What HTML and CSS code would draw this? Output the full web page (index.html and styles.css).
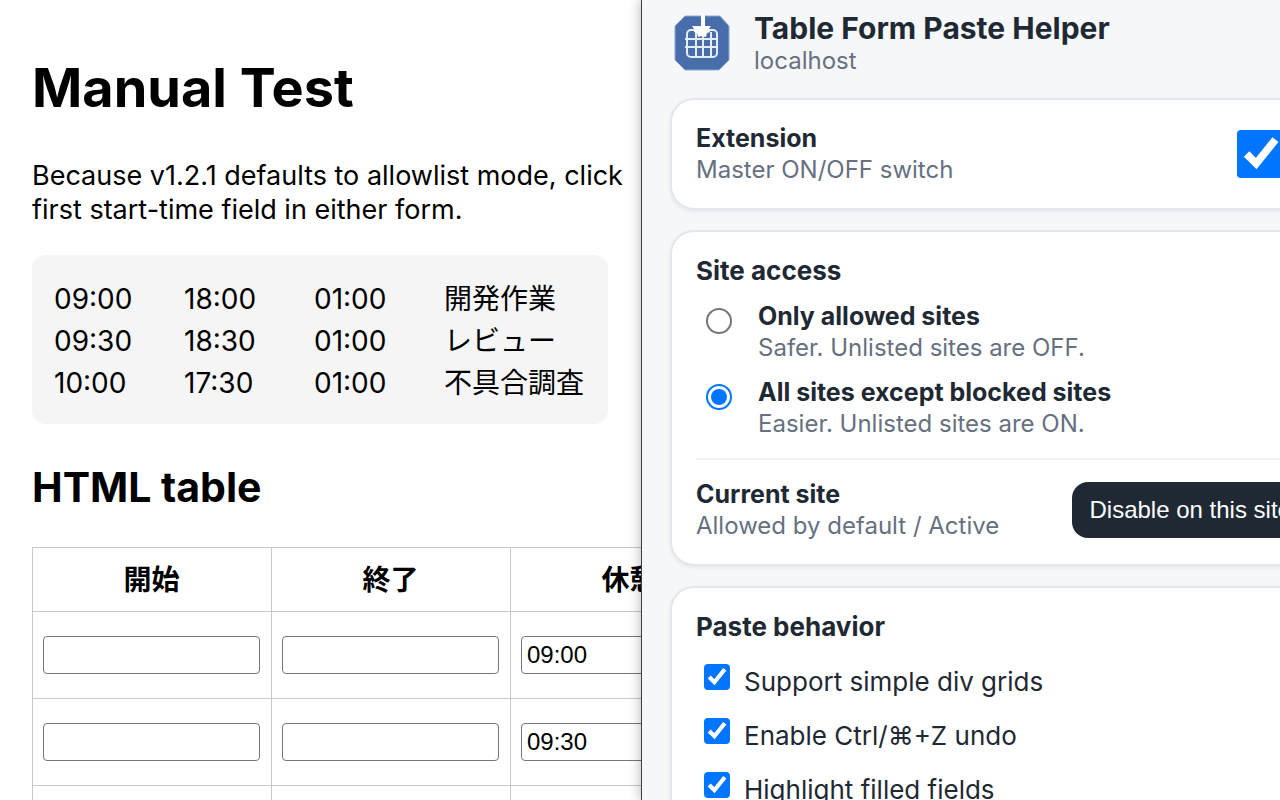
FILE: index.html
```
<!DOCTYPE html>
<html lang="en">
    <head>
        <meta charset="utf-8">
        <title>Manual Test</title>
        <link rel="stylesheet" href="styles.css">
    </head>
    <body>
        <div class="screen">
            <!-- test page -->
            <main class="page">
                <h1>Manual Test</h1>
                <p>Because v1.2.1 defaults to allowlist mode, click<br>first start-time field in either form.</p>
                <pre class="sample">09:00	18:00	01:00	開発作業
09:30	18:30	01:00	レビュー
10:00	17:30	01:00	不具合調査</pre>
                <h2>HTML table</h2>
                <table class="form-table">
                    <thead>
                        <tr><th>開始</th><th>終了</th><th>休憩</th></tr>
                    </thead>
                    <tbody>
                        <tr>
                            <td><input type="text" aria-label="開始 1"></td>
                            <td><input type="text" aria-label="終了 1"></td>
                            <td><input type="text" aria-label="休憩 1" value="09:00"></td>
                        </tr>
                        <tr>
                            <td><input type="text" aria-label="開始 2"></td>
                            <td><input type="text" aria-label="終了 2"></td>
                            <td><input type="text" aria-label="休憩 2" value="09:30"></td>
                        </tr>
                        <tr>
                            <td><input type="text" aria-label="開始 3"></td>
                            <td><input type="text" aria-label="終了 3"></td>
                            <td><input type="text" aria-label="休憩 3"></td>
                        </tr>
                    </tbody>
                </table>
            </main>

            <!-- extension popup -->
            <aside class="popup">
                <div class="popup-body">
                    <header class="brand">
                        <svg class="logo" viewBox="0 0 56 56" aria-hidden="true">
                            <path d="M11 1h35l9 10v34l-10 10H11L1 45V11z" fill="#476eab" stroke="#8ea8d2"/>
                            <g fill="none" stroke="#e4ecf8" stroke-width="2">
                                <rect x="13" y="15" width="30" height="27" rx="4"/>
                                <path d="M22 17v25M29 17v25M37 17v25M11 24h32M11 32h32"/>
                            </g>
                            <path d="M27 0h4v11h6l-2 3 1 3-3 1-1 4-4-1-4 1-1-4-3-1v-3l-2-3h9z" fill="#fff"/>
                        </svg>
                        <div>
                            <div class="name">Table Form Paste Helper</div>
                            <div class="hint">localhost</div>
                        </div>
                    </header>

                    <section class="card row">
                        <label for="master">
                            <strong>Extension</strong>
                            <span class="hint">Master ON/OFF switch</span>
                        </label>
                        <input type="checkbox" id="master" class="check check-big" checked>
                    </section>

                    <section class="card">
                        <h3>Site access</h3>
                        <div class="choice">
                            <input type="radio" name="mode" id="allowed" class="radio">
                            <label for="allowed">
                                <strong>Only allowed sites</strong>
                                <span class="hint">Safer. Unlisted sites are OFF.</span>
                            </label>
                        </div>
                        <div class="choice">
                            <input type="radio" name="mode" id="all" class="radio" checked>
                            <label for="all">
                                <strong>All sites except blocked sites</strong>
                                <span class="hint">Easier. Unlisted sites are ON.</span>
                            </label>
                        </div>
                        <div class="row current">
                            <div>
                                <strong>Current site</strong>
                                <span class="hint">Allowed by default / Active</span>
                            </div>
                            <button type="button">Disable on this site</button>
                        </div>
                    </section>

                    <section class="card">
                        <h3>Paste behavior</h3>
                        <div class="option">
                            <input type="checkbox" id="grids" class="check" checked>
                            <label for="grids">Support simple div grids</label>
                        </div>
                        <div class="option">
                            <input type="checkbox" id="undo" class="check" checked>
                            <label for="undo">Enable Ctrl/⌘+Z undo</label>
                        </div>
                        <div class="option">
                            <input type="checkbox" id="highlight" class="check" checked>
                            <label for="highlight">Highlight filled fields</label>
                        </div>
                    </section>
                </div>
            </aside>
        </div>
    </body>
</html>
```
FILE: styles.css
```
* {
    box-sizing: border-box;
}
body {
    margin: 0;
    background: #fff;
    color: #000;
    font-family: Inter, "Noto Sans CJK JP", sans-serif;
}
.screen {
    display: grid;
    grid-template-columns: calc(50% + 1px) 1fr;
    height: 100vh;
    overflow: hidden;
}
/* test page */
.page {
    min-width: 0;
    overflow: hidden;
    padding: 54px 0 0 32px;
    font-size: 27px;
    line-height: 34px;
    white-space: nowrap;
}
.page h1 {
    margin: 0 0 37px;
    font-size: 54px;
    line-height: 68px;
}
.page p {
    margin: 0 0 28px;
}
.sample {
    display: inline-block;
    margin: 0;
    padding: 23px 24px 20px 22px;
    border-radius: 14px;
    background: #f5f5f5;
    font-family: inherit;
    font-size: 28px;
    line-height: 42px;
    tab-size: 130px;
    vertical-align: top;
}
.page h2 {
    margin: 37px 0 34px;
    font-size: 41px;
    line-height: 52px;
}
.form-table {
    border-collapse: collapse;
}
.form-table th,
.form-table td {
    border: 1px solid #c8c8c8;
    padding: 0 11px 0 10px;
}
.form-table th {
    height: 64px;
    font-size: 28px;
}
.form-table td {
    height: 87px;
}
.form-table input {
    display: block;
    width: 217px;
    height: 38px;
    padding: 0 5px;
    border: 1px solid #767676;
    border-radius: 4px;
    background: #fff;
    color: #000;
    font: 24px "Liberation Sans", sans-serif;
}
/* popup */
.popup {
    z-index: 1;
    min-width: 0;
    overflow: hidden;
    border-left: 1px solid #3c3f43;
    background: #f6f7f9;
    box-shadow: 0 0 12px rgba(0, 0, 0, 0.3);
    color: #1f2933;
    font-size: 26px;
    line-height: 32px;
    white-space: nowrap;
}
/* wider than the visible part of the window */
.popup-body {
    display: flex;
    flex-direction: column;
    gap: 20px;
    width: 113%;
    padding: 12px 28px;
}
.brand {
    display: flex;
    align-items: flex-start;
    gap: 24px;
    padding: 0 0 1px 4px;
}
.logo {
    width: 56px;
    height: 56px;
    margin-top: 3px;
}
.name {
    font-size: 30px;
    font-weight: 700;
    line-height: 33px;
}
.hint {
    display: block;
    color: #667080;
    font-size: 24px;
}
.card {
    padding: 22px 24px;
    border: 2px solid #e2e6ee;
    border-radius: 24px;
    background: #fff;
    box-shadow: 0 2px 4px rgba(16, 24, 40, 0.06);
}
.card strong {
    display: block;
    font-size: 25px;
    font-weight: 700;
}
.row {
    display: flex;
    align-items: center;
    justify-content: space-between;
}
.card h3 {
    margin: 0;
    font-size: 26px;
    line-height: 34px;
}
.check,
.radio {
    flex: none;
    width: 26px;
    height: 26px;
    margin: 0;
    accent-color: #0075ff;
}
.check {
    clip-path: inset(0 round 4px);
}
.check-big {
    width: 48px;
    height: 48px;
    margin-right: 24px;
}
.choice {
    display: flex;
    gap: 26px;
    margin-top: 12px;
    padding-left: 10px;
}
.choice .radio {
    margin-top: 8px;
    border: 2px solid #767676;
    border-radius: 50%;
    background: #fff;
    appearance: none;
}
.choice .radio:checked {
    padding: 3px;
    border-color: #0075ff;
    background: #0075ff content-box;
}
.current {
    margin-top: 18px;
    padding-top: 18px;
    border-top: 2px solid #eef0f3;
}
.current button {
    height: 56px;
    padding: 0 18px;
    border: 0;
    border-radius: 16px;
    background: #1f2933;
    color: #fff;
    font: 24px "Liberation Sans", sans-serif;
}
.option {
    display: flex;
    gap: 14px;
    margin-top: 20px;
    padding-left: 8px;
}
.option label {
    padding-top: 2px;
}
```
